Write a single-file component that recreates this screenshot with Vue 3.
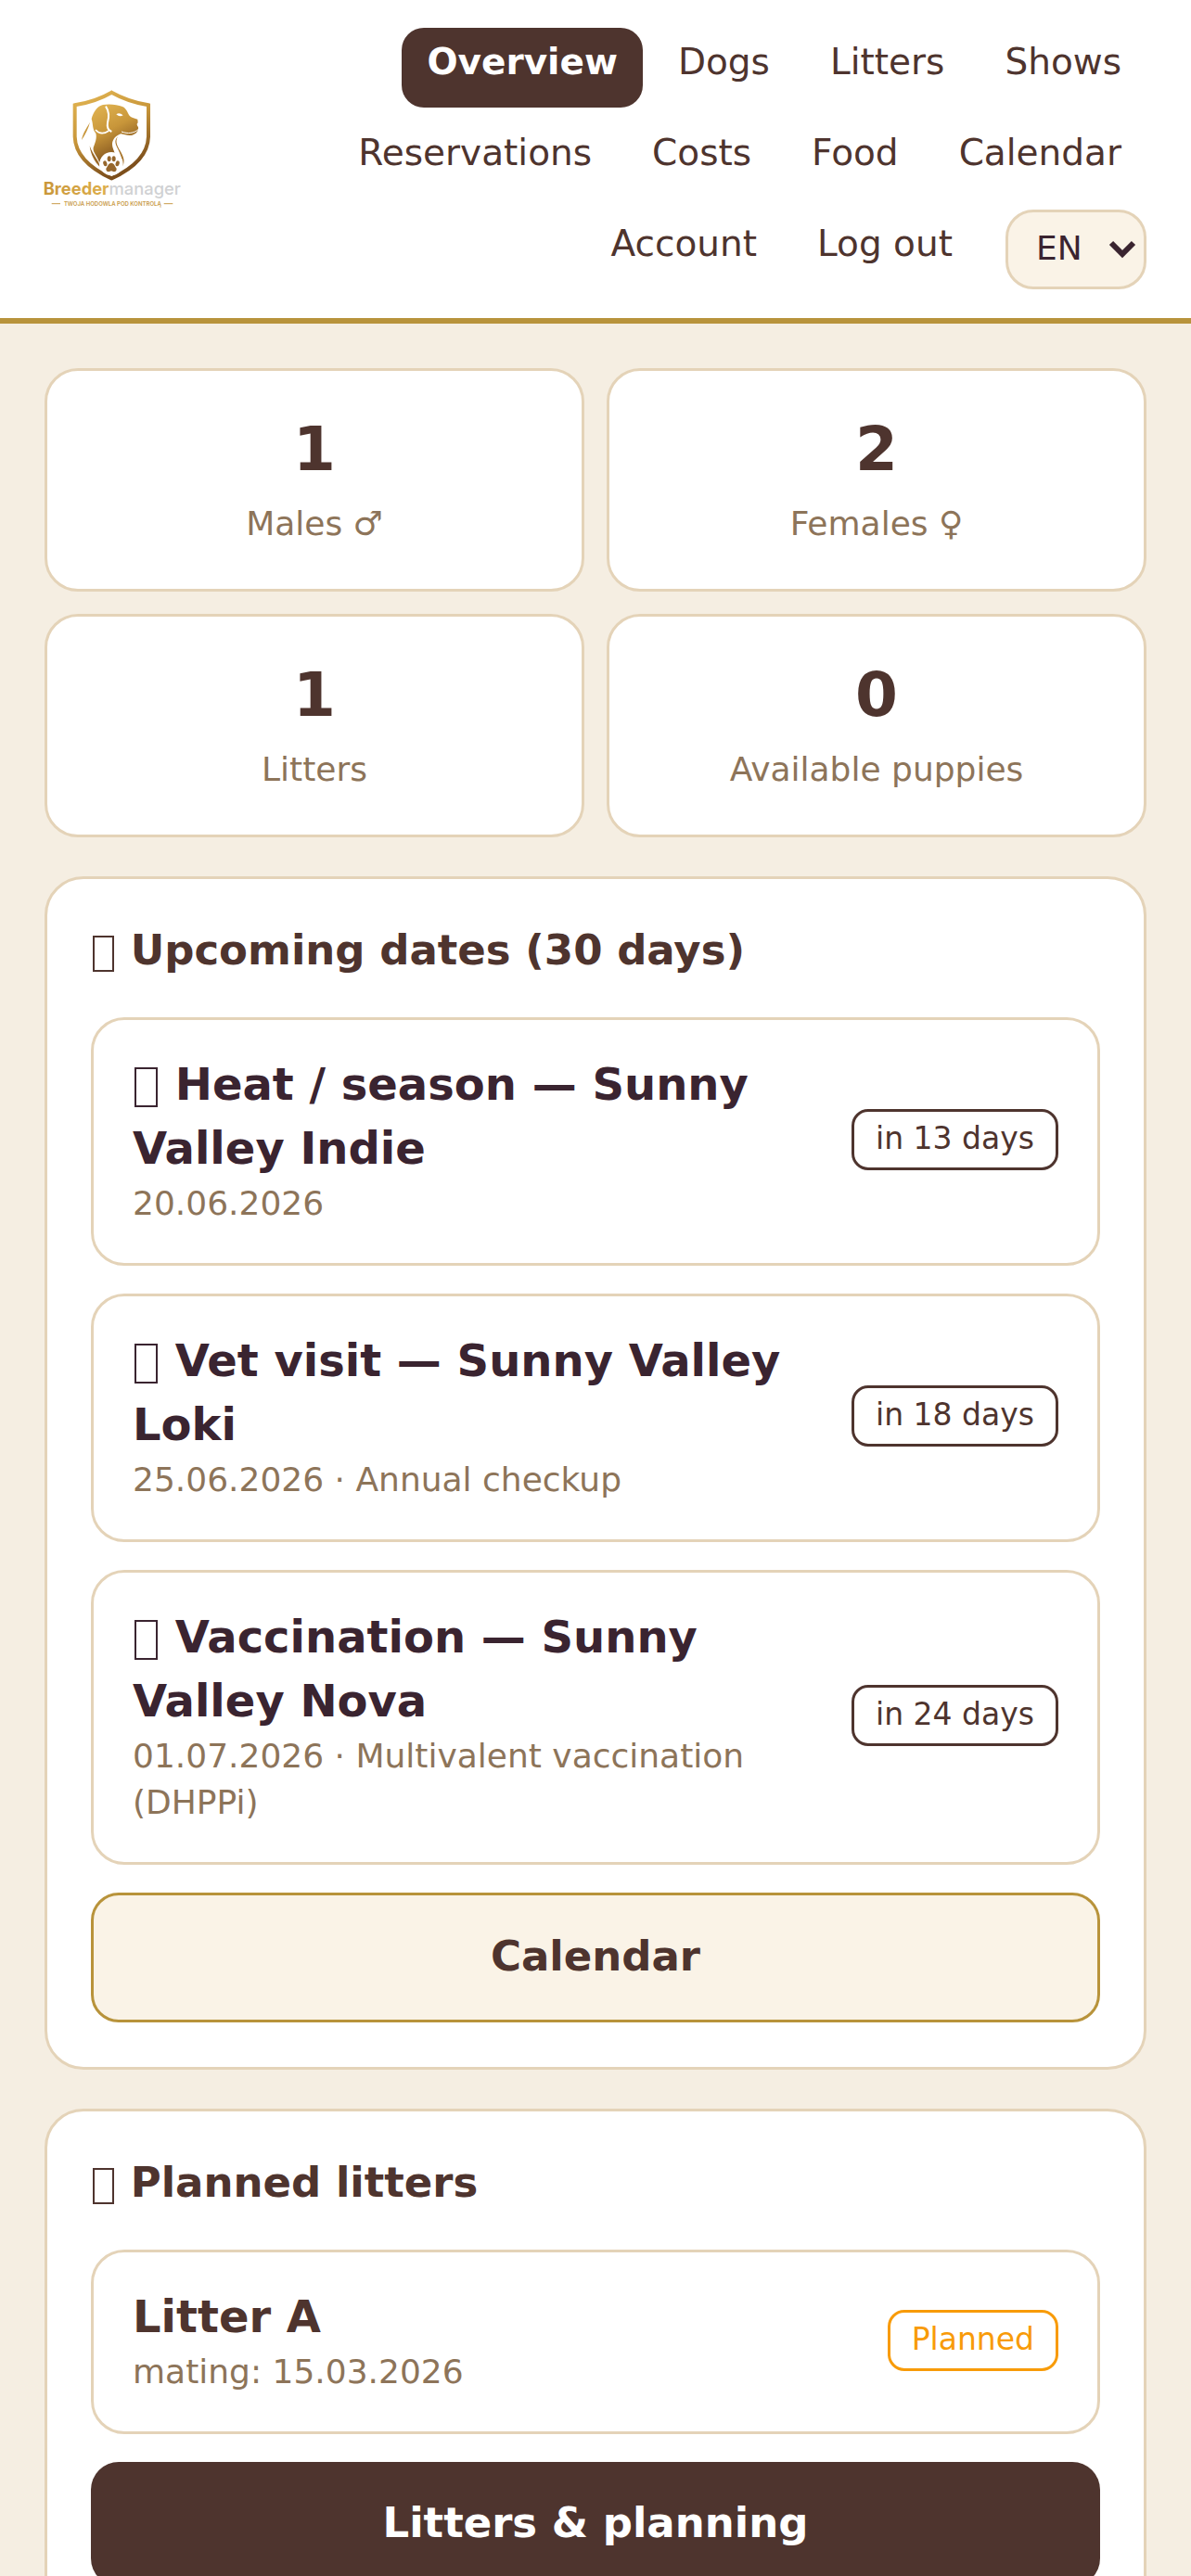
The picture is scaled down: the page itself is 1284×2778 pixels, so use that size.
<template>
  <div class="page">
    <header class="topbar">
      <a href="#" class="brand" aria-label="Breedermanager">
        <svg class="logo" viewBox="54 54 444 444" aria-hidden="true">
          <defs>
            <linearGradient id="gold" x1="0" y1="0" x2="0.4" y2="1">
              <stop offset="0" stop-color="#e3b653" />
              <stop offset="0.5" stop-color="#c8963a" />
              <stop offset="1" stop-color="#7d4f1c" />
            </linearGradient>
            <linearGradient id="word" x1="0" y1="0" x2="1" y2="0">
              <stop offset="0" stop-color="#c9973a" />
              <stop offset="0.5" stop-color="#dfb04c" />
              <stop offset="1" stop-color="#b9822c" />
            </linearGradient>
          </defs>
          <path
            d="M271 62 Q222 91 152 103 V205 C154 272 210 312 271 340 C332 312 388 272 390 205 V103 Q322 91 271 62Z"
            fill="none"
            stroke="url(#gold)"
            stroke-width="12"
          />
          <path
            d="M243 102 C262 98 290 101 306 108 C320 114 322 128 330 139 C337 145 346 146 355 149 L356 160 C351 164 353 169 357 174 C359 186 351 196 338 200 C325 202 312 199 301 196 C286 201 274 213 273 228 C273 243 279 249 281 259 C258 254 238 268 232 290 C226 270 209 256 212 240 C218 225 224 209 220 194 C208 183 212 165 206 148 C211 126 226 105 243 102Z"
            fill="url(#gold)"
          />
          <path
            d="M252 107 C264 125 262 146 258 160 C255 176 260 184 271 189"
            fill="none"
            stroke="#fff"
            stroke-width="6"
          />
          <path d="M219 183 C230 196 246 197 262 186" fill="none" stroke="#fff" stroke-width="5" />
          <path d="M286 133 Q296 125 308 136 Q297 143 286 133Z" fill="#fff" />
          <path d="M303 189 C323 197 344 194 357 182" fill="none" stroke="#fff" stroke-width="3" />
          <path d="M201 158 C190 178 178 193 174 216 C185 199 196 180 201 158Z" fill="#c8963a" />
          <path d="M200 235 C204 265 217 287 232 302 C234 286 211 267 200 235Z" fill="#9a6826" />
          <path d="M291 205 C267 229 306 247 307 301 C326 263 271 238 291 205Z" fill="#a8752c" />
          <circle cx="270" cy="293" r="38" fill="#fff" />
          <g fill="#96662b">
            <ellipse cx="250" cy="292" rx="6" ry="9" transform="rotate(-18 250 292)" />
            <ellipse cx="263" cy="277" rx="6" ry="9" />
            <ellipse cx="278" cy="277" rx="6" ry="9" />
            <ellipse cx="290" cy="292" rx="6" ry="9" transform="rotate(18 290 292)" />
            <path d="M270 290 C279 290 282 302 287 308 C288 320 277 320 270 316 C263 320 252 320 253 308 C258 302 261 290 270 290Z" />
          </g>
          <text x="50" y="393" class="wordmark">
            <tspan fill="url(#word)" font-weight="700">Breeder</tspan><tspan fill="#d0d1d3" font-weight="500">manager</tspan>
          </text>
          <text x="274" y="428" class="tagline">TWOJA HODOWLA POD KONTROLĄ</text>
          <path d="M77 422 H105 M440 422 H469" stroke="#c99c4a" stroke-width="3" />
        </svg>
      </a>

      <nav class="nav">
        <a
          v-for="link in links"
          :key="link"
          href="#"
          class="nav-link"
          :class="{ active: link === activeLink }"
        >{{ link }}</a>
        <div class="lang">
          <select v-model="language" class="lang-select" aria-label="Language">
            <option v-for="lang in languages" :key="lang" :value="lang">{{ lang }}</option>
          </select>
          <svg class="lang-arrow" viewBox="0 0 28 18" aria-hidden="true">
            <path d="M2 2 L14 14 L26 2" fill="none" stroke="currentColor" stroke-width="6" />
          </svg>
        </div>
      </nav>
    </header>

    <main class="content">
      <section class="stats">
        <article v-for="stat in stats" :key="stat.label" class="stat-card">
          <strong class="stat-value">{{ stat.value }}</strong>
          <span class="stat-label">{{ stat.label }}</span>
        </article>
      </section>

      <section class="panel">
        <h2><span class="glyph"></span> Upcoming dates (30 days)</h2>
        <div class="list">
          <article v-for="event in events" :key="event.title" class="item">
            <div class="item-text">
              <h3><span class="glyph"></span> {{ event.title }}</h3>
              <p>{{ event.details }}</p>
            </div>
            <span class="badge">{{ event.due }}</span>
          </article>
          <a href="#" class="btn btn-secondary">Calendar</a>
        </div>
      </section>

      <section class="panel">
        <h2><span class="glyph"></span> Planned litters</h2>
        <div class="list">
          <article v-for="litter in litters" :key="litter.name" class="item">
            <div class="item-text">
              <h3 class="litter-name">{{ litter.name }}</h3>
              <p>mating: {{ litter.mating }}</p>
            </div>
            <span class="badge badge-planned">{{ litter.status }}</span>
          </article>
          <a href="#" class="btn btn-primary">Litters &amp; planning</a>
        </div>
      </section>
    </main>
  </div>
</template>

<script setup>
import { ref } from 'vue'

const links = [
  'Overview',
  'Dogs',
  'Litters',
  'Shows',
  'Reservations',
  'Costs',
  'Food',
  'Calendar',
  'Account',
  'Log out',
]
const activeLink = ref('Overview')

const languages = ['EN', 'PL', 'DE']
const language = ref('EN')

const stats = ref([
  { value: 1, label: 'Males ♂' },
  { value: 2, label: 'Females ♀' },
  { value: 1, label: 'Litters' },
  { value: 0, label: 'Available puppies' },
])

const events = ref([
  { title: 'Heat / season — Sunny Valley Indie', details: '20.06.2026', due: 'in 13 days' },
  { title: 'Vet visit — Sunny Valley Loki', details: '25.06.2026 · Annual checkup', due: 'in 18 days' },
  {
    title: 'Vaccination — Sunny Valley Nova',
    details: '01.07.2026 · Multivalent vaccination (DHPPi)',
    due: 'in 24 days',
  },
])

const litters = ref([{ name: 'Litter A', mating: '15.03.2026', status: 'Planned' }])
</script>

<style>
body {
  margin: 0;
  background: #f5eee2;
}
</style>

<style scoped>
.page {
  min-height: 100vh;
  background: #f5eee2;
  color: #3a2430;
  font-family: 'DejaVu Sans', sans-serif;
}

.page * {
  box-sizing: border-box;
}

.topbar {
  display: flex;
  align-items: center;
  justify-content: space-between;
  gap: 24px;
  padding: 30px 48px 31px;
  background: #fff;
  border-bottom: 6px solid #b8933b;
}

.brand {
  flex: none;
  display: block;
}

.logo {
  display: block;
  width: 148px;
  height: 148px;
  overflow: visible;
}

.wordmark {
  font-family: Inter, sans-serif;
  font-size: 55px;
}

.tagline {
  font-family: Inter, sans-serif;
  font-size: 18px;
  font-weight: 600;
  fill: #c99c4a;
  text-anchor: middle;
}

.nav {
  display: flex;
  flex-wrap: wrap;
  justify-content: flex-end;
  gap: 12px 11px;
}

.nav-link {
  padding: 10px 27px 22px;
  border-radius: 24px;
  color: #4e342e;
  font-size: 39px;
  line-height: 54px;
  text-decoration: none;
}

.nav-link.active {
  background: #4e342e;
  color: #fff;
  font-weight: 700;
}

.lang {
  position: relative;
  margin-left: 19px;
}

.lang-select {
  appearance: none;
  display: block;
  width: 152px;
  height: 86px;
  padding: 0 60px 4px 30px;
  border: 3px solid #e4d3b8;
  border-radius: 30px;
  background: #faf3e7;
  color: #3a2430;
  font-family: inherit;
  font-size: 36px;
}

.lang-arrow {
  position: absolute;
  top: 34px;
  right: 12px;
  width: 28px;
  height: 18px;
  overflow: visible;
  color: #3a2430;
  pointer-events: none;
}

.content {
  display: grid;
  gap: 42px;
  padding: 48px;
}

.stats {
  display: grid;
  grid-template-columns: 1fr 1fr;
  gap: 24px;
}

.stat-card {
  display: grid;
  gap: 6px;
  padding: 39px 24px 42px;
  border: 3px solid #e4d3b8;
  border-radius: 36px;
  background: #fff;
  text-align: center;
}

.stat-value {
  color: #4e342e;
  font-size: 66px;
  line-height: 92px;
}

.stat-label {
  color: #8d7459;
  font-size: 36px;
  line-height: 56px;
}

.panel {
  padding: 48px 47px;
  border: 3px solid #e4d3b8;
  border-radius: 42px;
  background: #fff;
}

.panel h2 {
  margin: 0 0 43px;
  color: #4e342e;
  font-size: 45px;
  line-height: 58px;
}

/* outlined box in front of headings */
.glyph {
  display: inline-block;
  width: 23px;
  height: 39px;
  margin: 0 2px;
  border: 2px solid currentColor;
  vertical-align: -8px;
}

.item .glyph {
  width: 25px;
  height: 43px;
}

.list {
  display: grid;
  gap: 30px;
}

.item {
  display: flex;
  align-items: center;
  justify-content: space-between;
  gap: 36px;
  padding: 35px 42px 39px;
  border: 3px solid #e4d3b8;
  border-radius: 36px;
}

.item h3 {
  margin: 0;
  font-size: 48px;
  line-height: 69px;
}

.item .litter-name {
  color: #4e342e;
}

.item p {
  margin: 0;
  color: #8d7459;
  font-size: 36px;
  line-height: 50px;
}

.badge {
  flex: none;
  padding: 6px 23px 8px;
  border: 3px solid #4e342e;
  border-radius: 18px;
  color: #4e342e;
  font-size: 33px;
  line-height: 46px;
}

.badge-planned {
  border-color: #f89b08;
  color: #f89b08;
}

.btn {
  display: block;
  padding: 34px 24px 37px;
  border-radius: 30px;
  font-size: 45px;
  font-weight: 700;
  line-height: 63px;
  text-align: center;
  text-decoration: none;
}

.btn-secondary {
  border: 3px solid #b8933b;
  background: #faf3e7;
  color: #4e342e;
}

.btn-primary {
  background: #4e342e;
  color: #fff;
}
</style>
